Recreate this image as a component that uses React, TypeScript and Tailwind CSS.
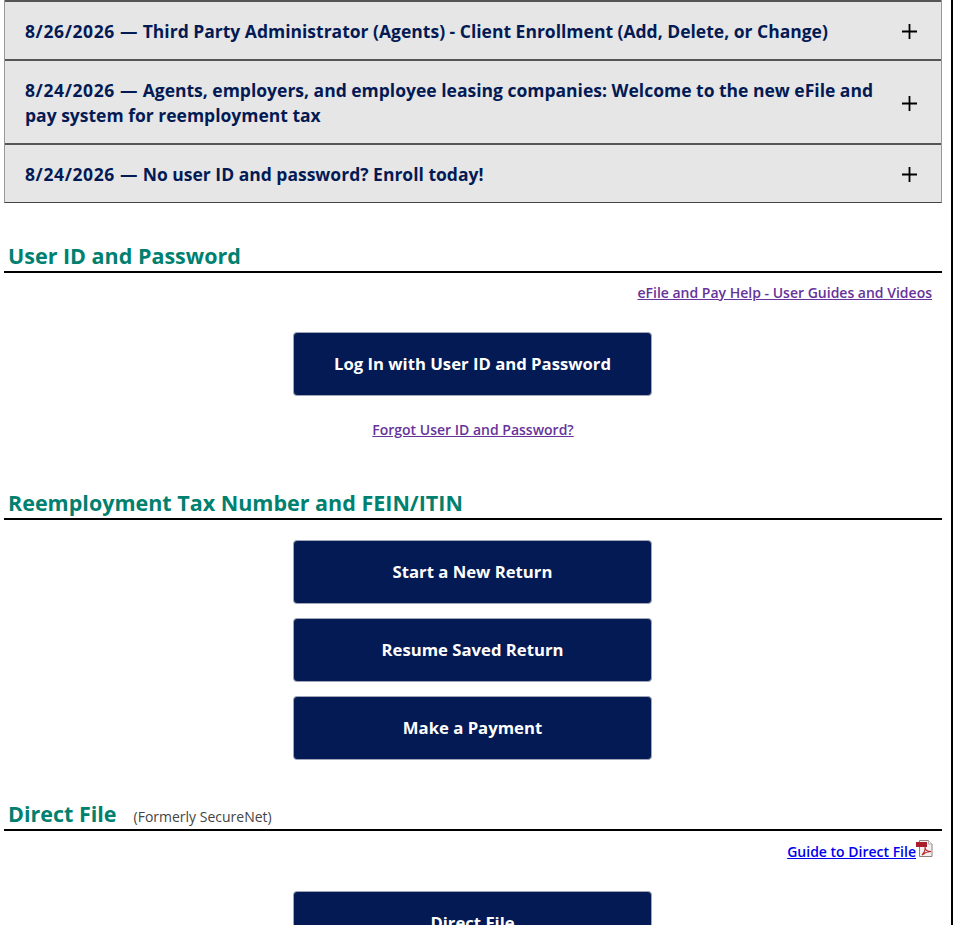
import React from 'react';

const notices = [
  { date: '8/26/2026', title: 'Third Party Administrator (Agents) - Client Enrollment (Add, Delete, or Change)' },
  { date: '8/24/2026', title: 'Agents, employers, and employee leasing companies: Welcome to the new eFile and pay system for reemployment tax' },
  { date: '8/24/2026', title: 'No user ID and password? Enroll today!' },
];

const Plus: React.FC = () => (
  <svg width="15" height="15" viewBox="0 0 15 15" className="shrink-0 text-black">
    <path d="M7.500 0v15M0 7.500h15" stroke="currentColor" strokeWidth="1.800" />
  </svg>
);

const PdfIcon: React.FC = () => (
  <svg width="17" height="17" viewBox="0 0 17 17" className="absolute right-[-17px] top-[-2px]">
    <path d="M3.500 .5h9l3.500 3.500v12.500H3.500z" fill="#f4f0f0" stroke="#8f7f7f" />
    <path d="M12.500 .5v3.500h3.500" fill="#fff" stroke="#b0a8a8" />
    <rect x="0" y="2" width="11" height="5" fill="#a81c2c" />
    <path d="M6 15c2-2 3.500-5 3-8 0 3 2 4.500 6 4.500-3 0-6 1-9 3.500z" fill="none" stroke="#b3202e" strokeWidth="1.100" />
  </svg>
);

const NavyButton: React.FC<{ label: string; className?: string }> = ({ label, className }) => (
  <button className={`ml-[289px] flex h-[64px] w-[359px] items-center justify-center rounded-[4px] border border-[#a0a6b8] bg-[#041a54] text-[16.700px] font-bold text-white ${className ?? ''}`}>
    {label}
  </button>
);

const Heading: React.FC<{ title: string; note?: string }> = ({ title, note }) => (
  <div className="flex items-baseline border-b-2 border-black pl-[4px] pb-[1px]">
    <h2 className="text-[21.500px] leading-[28px] font-bold text-[#00806f]">{title}</h2>
    {note && <span className="ml-[17px] text-[14px] text-[#444]">{note}</span>}
  </div>
);

const App: React.FC = () => {
  return (
    <div className="h-[925px] w-[953px] overflow-hidden border-r-2 border-black bg-white pl-[4px] pr-[9px] font-['Open_Sans',sans-serif]">
      <div className="border-x border-b border-[#999] border-b-[#444]">
        {notices.map((notice) => (
          <div key={notice.title} className="flex items-center justify-between border-t-2 border-[#555] bg-[#e6e6e6] pt-[17px] pb-[15px] pl-[20px] pr-[24px]">
            <span className="max-w-[860px] text-[17.500px] leading-[25px] font-bold text-[#041a54]">
              <span className="tracking-[0.6px]">{notice.date} —</span> {notice.title}
            </span>
            <Plus />
          </div>
        ))}
      </div>

      <section className="mt-[39px]">
        <Heading title="User ID and Password" />
        <div className="mt-[7px] pr-[10px] text-right">
          <a href="#" className="text-[14px] leading-[20px] font-semibold text-[#663399] underline">eFile and Pay Help - User Guides and Videos</a>
        </div>
        <NavyButton label="Log In with User ID and Password" className="mt-[28px]" />
        <div className="mt-[21px] text-center">
          <a href="#" className="text-[14px] leading-[20px] font-semibold text-[#663399] underline">Forgot User ID and Password?</a>
        </div>
      </section>

      <section className="mt-[48px]">
        <Heading title="Reemployment Tax Number and FEIN/ITIN" />
        <div className="mt-[20px] flex flex-col gap-[14px]">
          <NavyButton label="Start a New Return" />
          <NavyButton label="Resume Saved Return" />
          <NavyButton label="Make a Payment" />
        </div>
      </section>

      <section className="mt-[40px]">
        <Heading title="Direct File" note="(Formerly SecureNet)" />
        <div className="mt-[8px] pr-[26px] text-right">
          <a href="#" className="relative text-[14px] leading-[20px] font-semibold text-[#0000ee] underline">
            Guide to Direct File
            <PdfIcon />
          </a>
        </div>
        <NavyButton label="Direct File" className="mt-[28px]" />
      </section>
    </div>
  );
};

export default App;
